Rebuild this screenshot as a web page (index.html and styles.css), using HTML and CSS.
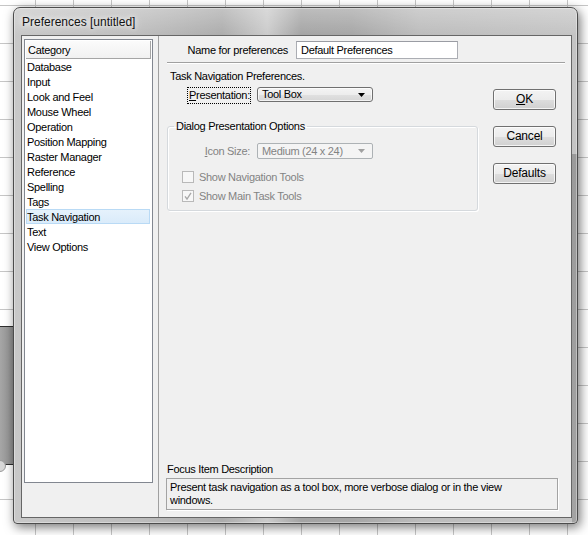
FILE: index.html
```html
<!DOCTYPE html>
<html>
<head>
<meta charset="utf-8">
<title>Preferences [untitled]</title>
<link rel="stylesheet" href="styles.css">
</head>
<body>
<div class="desktop">
  <div class="behind"><span class="behind-knob"></span></div>
  <div class="window">
    <div class="titlebar"><span class="title">Preferences [untitled]</span></div>
    <div class="client">
      <div class="leftpane">
        <div class="list">
          <div class="list-header">Category</div>
          <div class="item">Database</div>
          <div class="item">Input</div>
          <div class="item">Look and Feel</div>
          <div class="item">Mouse Wheel</div>
          <div class="item">Operation</div>
          <div class="item">Position Mapping</div>
          <div class="item">Raster Manager</div>
          <div class="item">Reference</div>
          <div class="item">Spelling</div>
          <div class="item">Tags</div>
          <div class="item selected">Task Navigation</div>
          <div class="item">Text</div>
          <div class="item">View Options</div>
        </div>
      </div>
      <div class="rightpane">
        <div class="name-row">
          <span class="name-label">Name for preferences</span>
          <div class="textbox">Default Preferences</div>
        </div>
        <div class="separator"></div>
        <div class="middle">
          <div class="settings">
            <div class="heading">Task Navigation Preferences.</div>
            <div class="field-row">
              <span class="pres-label"><u>P</u>resentation:</span>
              <div class="combo">
                <span class="combo-text">Tool Box</span>
                <svg class="arrow" width="7" height="4" viewBox="0 0 7 4"><polygon points="0,0 7,0 3.5,4" fill="#000"/></svg>
              </div>
            </div>
            <fieldset class="group">
              <legend>Dialog Presentation Options</legend>
              <div class="icon-row">
                <span class="icon-label"><u>I</u>con Size:</span>
                <div class="combo disabled">
                  <span class="combo-text">Medium (24 x 24)</span>
                  <svg class="arrow" width="7" height="4" viewBox="0 0 7 4"><polygon points="0,0 7,0 3.5,4" fill="#a0a0a0"/></svg>
                </div>
              </div>
              <div class="check-row">
                <svg class="checkbox" width="12" height="12" viewBox="0 0 12 12"><rect x="0.5" y="0.5" width="11" height="11" fill="#f7f7f7" stroke="#b9b9b9"/></svg>
                <span>Show Navigation Tools</span>
              </div>
              <div class="check-row">
                <svg class="checkbox" width="12" height="12" viewBox="0 0 12 12"><rect x="0.5" y="0.5" width="11" height="11" fill="#f7f7f7" stroke="#b9b9b9"/><path d="M3 6.3 L5 9 L9 2.8" fill="none" stroke="#a8a8a8" stroke-width="1.3"/></svg>
                <span>Show Main Task Tools</span>
              </div>
            </fieldset>
          </div>
          <div class="buttons">
            <div class="btn"><u>O</u>K</div>
            <div class="btn">Cancel</div>
            <div class="btn">Defaults</div>
          </div>
        </div>
        <div class="focus">
          <div class="focus-label">Focus Item Description</div>
          <div class="focus-box">Present task navigation as a tool box, more verbose dialog or in the view<br>windows.</div>
        </div>
      </div>
    </div>
  </div>
</div>
</body>
</html>
```

FILE: styles.css
```css
* { box-sizing: border-box; }

html, body {
  margin: 0;
  padding: 0;
}

body {
  font-family: "Liberation Sans", Arial, sans-serif;
  font-size: 11px;
  letter-spacing: -0.3px;
  color: #000;
}

.desktop {
  position: relative;
  width: 588px;
  height: 535px;
  overflow: hidden;
  background-color: #ffffff;
  background-image:
    linear-gradient(to right, #c6c6c6 1px, transparent 1px),
    linear-gradient(to bottom, #c6c6c6 1px, transparent 1px);
  background-size: 38px 38px;
  background-position: 35px 5px;
}

.behind {
  position: absolute;
  left: 0;
  top: 326px;
  width: 14px;
  height: 139px;
  background: linear-gradient(to right, #a6a6a6, #8e8e8e);
  border-top: 1px solid #2e2e2e;
  border-bottom: 1px solid #2e2e2e;
}

.behind-knob {
  position: absolute;
  left: -6px;
  bottom: -8px;
  width: 12px;
  height: 12px;
  border-radius: 50%;
  border: 1px solid #9a9a9a;
  background: #d8d8d8;
}

.window {
  position: absolute;
  left: 13px;
  top: 7px;
  width: 565px;
  height: 517px;
  display: flex;
  flex-direction: column;
  padding: 0 5px 5px 7px;
  border: 1px solid #4c4c4c;
  border-radius: 7px 7px 4px 4px;
  background:
    linear-gradient(#9a9a9a, #a3a3a3) right 0 top 146px / 5px calc(100% - 146px) no-repeat,
    linear-gradient(to bottom, rgba(255,255,255,0.28), rgba(255,255,255,0) 28px),
    linear-gradient(to right, #c8c8c8 0%, #bdbdbd 22%, #acacac 37%, #cbcbcb 45%, #a4a4a4 51%, #a6a6a6 60%, #bcbcbc 72%, #c4c4c4 100%);
  box-shadow: inset 0 0 0 1px rgba(255,255,255,0.35), 2px 3px 11px rgba(0,0,0,0.55);
}

.titlebar {
  height: 27px;
  flex: none;
  line-height: 28px;
  padding-left: 1px;
}

.title {
  font-family: "Liberation Sans", Arial, sans-serif;
  font-size: 12px;
  letter-spacing: 0;
  color: #111;
  text-shadow: 0 0 5px #fff, 0 0 9px rgba(255,255,255,0.9);
}

.client {
  flex: 1;
  display: flex;
  background: #f0f0f0;
  border: 1px solid #666;
}

.leftpane {
  width: 137px;
  flex: none;
  padding: 3px 0 0 2px;
  border-right: 1px solid #a0a0a0;
}

.list {
  width: 129px;
  height: 444px;
  background: #fff;
  border: 1px solid #828790;
  padding: 1px 1px 0;
}

.list-header {
  height: 18px;
  line-height: 18px;
  padding-left: 2px;
  background: linear-gradient(#fbfbfb, #f1f1f1);
  border-bottom: 1px solid #a5a5a5;
  border-right: 1px solid #a5a5a5;
}

.item {
  height: 15px;
  line-height: 16px;
  padding-left: 1px;
  white-space: nowrap;
}

.item.selected {
  margin-right: 1px;
  background: linear-gradient(#e6f2fc, #d9ebfa);
  box-shadow: inset 0 0 0 1px #b9daf5;
}

.rightpane {
  flex: 1;
  display: flex;
  flex-direction: column;
}

.name-row {
  display: flex;
  align-items: center;
  margin-top: 5px;
  padding-left: 25px;
}

.name-label {
  width: 104px;
  text-align: right;
  white-space: nowrap;
  margin-right: 8px;
}

.textbox {
  width: 162px;
  height: 18px;
  line-height: 16px;
  padding-left: 4px;
  background: #fff;
  border: 1px solid #abadb3;
  border-top-color: #9a9ca3;
  white-space: nowrap;
}

.separator {
  margin: 3px 0 0 8px;
  width: 398px;
  border-top: 1px solid #a0a0a0;
  border-bottom: 1px solid #fff;
}

.middle {
  display: flex;
}

.settings {
  padding-left: 8px;
}

.heading {
  margin-top: 5px;
  padding-left: 3px;
  line-height: 14px;
  white-space: nowrap;
}

.field-row {
  display: flex;
  align-items: flex-start;
  margin-top: 4px;
}

.pres-label {
  width: 64px;
  height: 17px;
  margin-left: 20px;
  padding: 0 1px;
  line-height: 15px;
  border: 1px dotted #000;
  white-space: nowrap;
}

.combo {
  width: 116px;
  height: 15px;
  margin-left: 6px;
  display: flex;
  align-items: center;
  justify-content: space-between;
  padding: 0 7px 0 4px;
  border: 1px solid #707070;
  border-radius: 3px;
  background: linear-gradient(#f4f4f4 0%, #ededed 50%, #e1e1e1 51%, #d6d6d6 100%);
  box-shadow: inset 0 0 0 1px rgba(255,255,255,0.7);
  white-space: nowrap;
}

.combo-text {
  line-height: 13px;
}

.arrow {
  display: block;
  flex: none;
}

.combo.disabled {
  height: 16px;
  margin-left: 6px;
  border-color: #adb2b5;
  border-radius: 2px;
  background: #f4f4f4;
  box-shadow: none;
  color: #838383;
}

.group {
  margin: 15px 0 0 0;
  width: 311px;
  min-width: 0;
  padding: 10px 8px 5px 6px;
  border: 1px solid #d5d9dd;
  border-radius: 3px;
  box-shadow: inset 1px 1px 0 #fff, 1px 1px 0 #fff;
}

.group legend {
  padding: 0 2px;
  line-height: 14px;
  white-space: nowrap;
}

.icon-row {
  display: flex;
  align-items: center;
  margin-left: 8px;
}

.icon-label {
  width: 69px;
  text-align: right;
  padding-right: 1px;
  color: #838383;
  white-space: nowrap;
}

.check-row {
  display: flex;
  align-items: center;
  height: 19px;
  margin-left: 8px;
  color: #838383;
  white-space: nowrap;
}

.icon-row + .check-row {
  margin-top: 8px;
}

.checkbox {
  display: block;
  flex: none;
  margin-right: 5px;
}

.buttons {
  margin-left: auto;
  margin-right: 15px;
  padding-top: 25px;
  display: flex;
  flex-direction: column;
  gap: 16px;
}

.btn {
  width: 63px;
  height: 21px;
  line-height: 19px;
  text-align: center;
  border: 1px solid #707070;
  border-radius: 3px;
  background: linear-gradient(#f3f3f3 0%, #ececec 50%, #dedede 51%, #d0d0d0 100%);
  box-shadow: inset 0 0 0 1px rgba(255,255,255,0.75);
  font-size: 12px;
  letter-spacing: -0.2px;
}

.focus {
  margin-top: auto;
  margin-bottom: 7px;
}

.focus-label {
  padding-left: 8px;
  line-height: 14px;
  margin-bottom: 2px;
}

.focus-box {
  margin-left: 7px;
  width: 392px;
  height: 32px;
  padding: 2px 0 0 3px;
  line-height: 13px;
  border: 1px solid #a3a3a3;
  box-shadow: 1px 1px 0 #fff;
  white-space: nowrap;
}
```
